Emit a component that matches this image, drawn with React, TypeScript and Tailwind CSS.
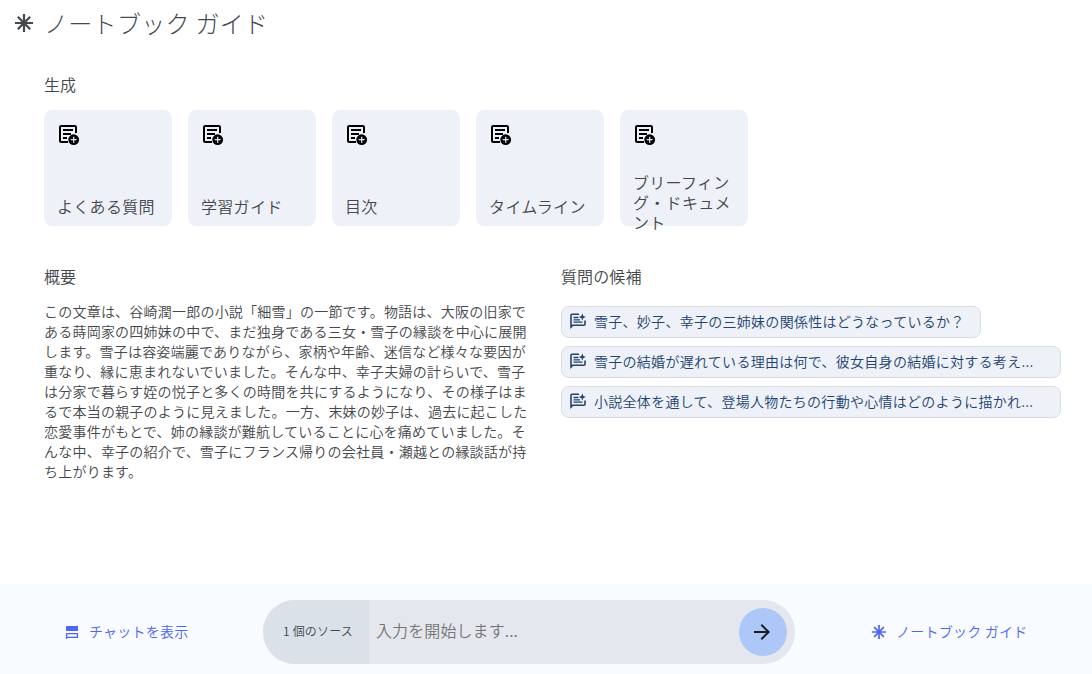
import { ReactNode } from 'react'

interface IconProps {
  className?: string
}

const GUIDES = ['よくある質問', '学習ガイド', '目次', 'タイムライン', 'ブリーフィング・ドキュメント']

const QUESTIONS = [
  '雪子、妙子、幸子の三姉妹の関係性はどうなっているか？',
  '雪子の結婚が遅れている理由は何で、彼女自身の結婚に対する考え...',
  '小説全体を通して、登場人物たちの行動や心情はどのように描かれ...'
]

const SUMMARY =
  'この文章は、谷崎潤一郎の小説「細雪」の一節です。物語は、大阪の旧家である蒔岡家の四姉妹の中で、まだ独身である三女・雪子の縁談を中心に展開します。雪子は容姿端麗でありながら、家柄や年齢、迷信など様々な要因が重なり、縁に恵まれないでいました。そんな中、幸子夫婦の計らいで、雪子は分家で暮らす姪の悦子と多くの時間を共にするようになり、その様子はまるで本当の親子のように見えました。一方、末妹の妙子は、過去に起こした恋愛事件がもとで、姉の縁談が難航していることに心を痛めていました。そんな中、幸子の紹介で、雪子にフランス帰りの会社員・瀬越との縁談話が持ち上がります。'

function AsteriskIcon({ className }: IconProps) {
  return (
    <svg viewBox="0 0 18 18" className={className} fill="none" stroke="currentColor" strokeWidth="2.2">
      <path d="M9 0v18M0 9h18M2.8 2.8l12.4 12.4M15.2 2.8L2.8 15.2" />
    </svg>
  )
}

function NoteAddIcon({ className }: IconProps) {
  return (
    <svg viewBox="0 0 24 24" className={className} fill="none" stroke="currentColor" strokeWidth="2">
      <path d="M19 11V5a1 1 0 0 0-1-1H4a1 1 0 0 0-1 1v14a1 1 0 0 0 1 1h7" />
      <path d="M6 8h10M6 12h8M6 16h4" />
      <circle cx="16.700" cy="17.700" r="5.400" fill="currentColor" stroke="none" />
      <path d="M16.700 14.700v6M13.700 17.700h6" stroke="#dfe3ea" strokeWidth="1.300" />
    </svg>
  )
}

function ChatSparkIcon({ className }: IconProps) {
  return (
    <svg viewBox="0 0 16 16" className={className} fill="none" stroke="currentColor" strokeWidth="1.600">
      <path d="M9 1.300H2a1 1 0 0 0-1 1V14l1.800-1.800H14a1 1 0 0 0 1-1V7.500" />
      <path d="M3.500 4.500h5M3.500 6.800h6.500M3.500 9.100h9" strokeWidth="1.300" />
      <path d="M12.300 0.500l1.100 2.400 2.400 1.100-2.400 1.100-1.100 2.400-1.100-2.400-2.400-1.100 2.400-1.100z" fill="currentColor" stroke="none" />
    </svg>
  )
}

function PanelsIcon({ className }: IconProps) {
  return (
    <svg viewBox="0 0 14 14" className={className} fill="none" stroke="currentColor">
      <path d="M1 6V2q0-1 1-1h10q1 0 1-1v6z" fill="currentColor" stroke="none" />
      <path d="M1.600 14V8.600h10.800v3.800H1.600" strokeWidth="1.300" />
    </svg>
  )
}

function ArrowIcon({ className }: IconProps) {
  return (
    <svg viewBox="0 0 24 24" className={className} fill="currentColor">
      <path d="M12 4l-1.410 1.410L16.170 11H4v2h12.170l-5.580 5.590L12 20l8-8z" />
    </svg>
  )
}

function GuideCard({ label }: { label: string }) {
  return (
    <button className="flex h-[116px] w-32 flex-col items-start justify-between rounded-lg bg-[#eef2f8] px-[13px] pt-3 text-left">
      <NoteAddIcon className="h-6 w-6 shrink-0 text-black" />
      <span className={label.length > 6 ? '-mb-1.5 leading-5 tracking-[0.3px]' : 'mb-2.5 leading-5 tracking-[0.3px]'}>
        {label}
      </span>
    </button>
  )
}

function QuestionChip({ text }: { text: string }) {
  return (
    <button className="flex h-8 max-w-full items-center gap-2 rounded-lg border border-[#d8dce3] bg-[#eef2f8] pr-[15px] pl-2 text-sm tracking-[0.28px] whitespace-nowrap text-[#23426f]">
      <ChatSparkIcon className="mb-0.5 h-4 w-4 shrink-0" />
      <span className={text.endsWith('...') ? 'w-[451px] pb-0.5 text-left' : 'pb-0.5'}>{text}</span>
    </button>
  )
}

function SectionTitle({ children }: { children: ReactNode }) {
  return <h2 className="text-base leading-6 tracking-[0.1px]">{children}</h2>
}

export default function App() {
  return (
    <div className="flex h-[674px] w-[1092px] flex-col overflow-hidden bg-white font-['Noto_Sans_CJK_JP',sans-serif] font-[350] text-[#44474b]">
      <header className="flex h-12 items-center gap-[11px] pl-[15px]">
        <AsteriskIcon className="mb-0.5 h-[18px] w-[18px]" />
        <h1 className="pb-0.5 text-2xl leading-8 font-light tracking-[0.3px]">ノートブック ガイド</h1>
      </header>

      <main className="flex-1 pt-6 pl-11">
        <SectionTitle>生成</SectionTitle>
        <div className="mt-3.5 flex gap-4">
          {GUIDES.map((label) => (
            <GuideCard key={label} label={label} />
          ))}
        </div>

        <div className="mt-[38px] flex gap-[33px]">
          <section className="w-[484px]">
            <SectionTitle>概要</SectionTitle>
            <p className="mt-[13px] text-sm leading-5 tracking-[0.22px]">{SUMMARY}</p>
          </section>
          <section className="w-[500px]">
            <SectionTitle>質問の候補</SectionTitle>
            <div className="mt-[18px] flex flex-col items-start gap-2">
              {QUESTIONS.map((text) => (
                <QuestionChip key={text} text={text} />
              ))}
            </div>
          </section>
        </div>
      </main>

      <footer className="flex h-[90px] shrink-0 items-start bg-[#f8fbff] pt-4 text-sm tracking-[0.2px]">
        <button className="flex h-16 w-[263px] items-center gap-[10px] pl-[65px] tracking-[0.25px] text-[#4d66f2]">
          <PanelsIcon className="h-[14px] w-[14px]" />
          <span className="pb-0.5">チャットを表示</span>
        </button>
        <div className="flex h-16 w-[532px] items-center overflow-hidden rounded-full bg-[#e4e7ee]">
          <div className="flex h-16 w-[106px] items-center bg-[#dbe1e9] pb-0.5 pl-5 text-xs">1 個のソース</div>
          <div className="flex-1 pb-1 pl-[7px] text-base tracking-[0.1px] text-[#757575]">入力を開始します...</div>
          <button className="mr-2 flex h-12 w-12 items-center justify-center rounded-full bg-[#adc8f8] pr-0.5 text-[#1b1c1f]">
            <ArrowIcon className="h-6 w-6" />
          </button>
        </div>
        <button className="flex h-16 items-center gap-[10px] pl-[77px] tracking-[0.25px] text-[#4d66f2]">
          <AsteriskIcon className="h-[14px] w-[14px]" />
          <span className="pb-0.5">ノートブック ガイド</span>
        </button>
      </footer>
    </div>
  )
}
